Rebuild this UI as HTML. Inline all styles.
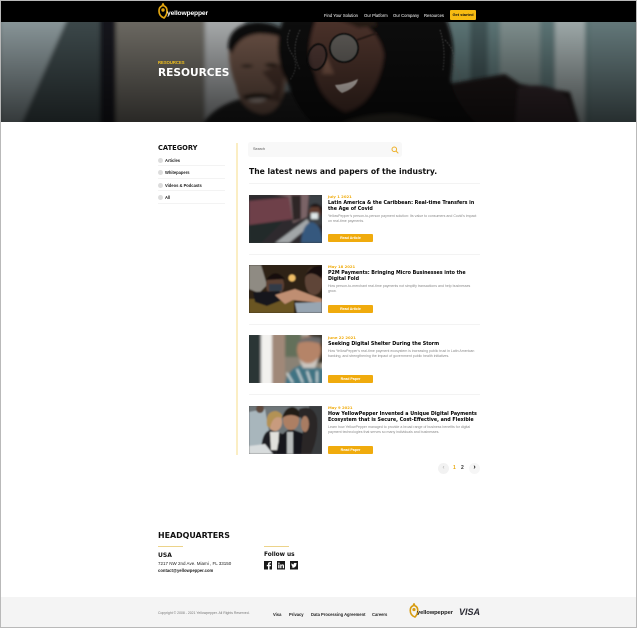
<!DOCTYPE html>
<html><head><meta charset="utf-8"><style>
*{margin:0;padding:0;box-sizing:border-box}
html,body{width:637px;height:628px;overflow:hidden;background:#fff}
body{position:relative;font-family:"Liberation Sans",sans-serif;color:#111}
.a{position:absolute;white-space:nowrap}
.h{font-family:"DejaVu Sans",sans-serif;font-weight:bold}
.nav{font-size:4.2px;color:#fff;top:13px}
.cat{font-size:4.1px;font-weight:bold;left:165px;color:#222}
.dot{position:absolute;left:158px;width:5px;height:5px;border-radius:50%;background:#dcdcdc}
.ln{position:absolute;height:1px;background:#f3f3f3}
.date{font-family:"DejaVu Sans",sans-serif;font-size:3.8px;font-weight:bold;color:#f0ac0e;left:328px}
.t{font-family:"DejaVu Sans",sans-serif;font-size:4.8px;font-weight:bold;color:#000;left:328px;line-height:6px}
.d{font-size:3.55px;color:#8a8a8a;left:328px;line-height:5.2px}
.btn{position:absolute;left:328px;width:45px;height:8px;background:#f0ab0d;color:#fff;font-size:3.6px;font-weight:bold;text-align:center;line-height:8px;border-radius:1px}
.img{position:absolute;left:249px;width:73px;height:48px;overflow:hidden}
.f{font-size:4.1px;font-weight:bold;top:612px;color:#222}
</style></head><body>
<div class="a" style="left:0;top:0;width:637px;height:628px;border:1px solid #b9b9b9;z-index:9;white-space:normal"></div>

<svg class="a" style="left:0;top:22px" width="637" height="100" viewBox="0 0 637 100">
<defs><filter id="b" x="-10%" y="-10%" width="120%" height="120%"><feGaussianBlur stdDeviation="2.2"/></filter><filter id="b1" x="-10%" y="-10%" width="120%" height="120%"><feGaussianBlur stdDeviation="1.800"/></filter><filter id="b2"><feGaussianBlur stdDeviation=".5"/></filter>
<linearGradient id="g" x1="0" x2="0" y1="0" y2="1"><stop offset="0" stop-color="#000" stop-opacity=".02"/><stop offset="1" stop-color="#000" stop-opacity=".62"/></linearGradient></defs>
<rect width="637" height="100" fill="#5f6b6e"/>
<g filter="url(#b)">
<polygon points="0,-5 68,-5 20,105 0,105" fill="#8a979a"/>
<polygon points="68,-5 100,-5 100,105 20,105" fill="#3d494b"/>
<rect x="100" y="-5" width="16" height="110" fill="#15191b"/>
<rect x="116" y="-5" width="90" height="110" fill="#6d6a64"/>
<rect x="205" y="-5" width="40" height="110" fill="#a9acad"/>
<rect x="450" y="-5" width="187" height="110" fill="#5d7677"/>
<rect x="500" y="-5" width="40" height="110" fill="#80908f"/>
<rect x="555" y="-5" width="30" height="110" fill="#a0abab"/>
<rect x="590" y="-5" width="47" height="110" fill="#657a7c"/>
<rect x="470" y="-5" width="18" height="110" fill="#425759"/>
</g>
<g filter="url(#b1)">
<path d="M200 105Q215 82 245 76L300 68 480 105Z" fill="#1c1c1c"/>
<path d="M445 100 448 62 505 52 520 62 570 70 580 105H440Z" fill="#1a1919"/>
<path d="M518 66Q548 58 568 76L578 105H515Z" fill="#33282a"/>
<path d="M229 26Q232 8 258 6 285 8 290 35L284 70Q278 92 262 92 240 88 236 64Q228 45 229 26Z" fill="#6a5145"/>
<path d="M228 26Q228 2 258 0 288 2 296 26 283 11 258 12 238 14 232 32Z" fill="#110e0d"/>
<path d="M240 44Q247 41 254 44 247 47 240 44ZM264 43Q271 39 279 43 271 47 264 43Z" fill="#1a1310"/>
<path d="M262 50 276 66 268 78 280 80 286 40Z" fill="#463329"/>
<path d="M242 74Q256 69 272 73L268 77Q256 75 246 78Z" fill="#1b1311"/>
<path d="M247 78Q258 76 267 77 258 83 247 78Z" fill="#a89a92"/>
<path d="M284 -5Q270 30 288 62 298 90 316 105H480Q448 75 450 45 458 25 445 -5Z" fill="#0c0a0a"/>
<path d="M317 -5Q303 30 315 52 320 78 345 90 372 84 382 45 388 15 380 -5Z" fill="#4c3329"/>
<path d="M352 -5Q388 12 384 48 380 75 358 94 420 100 448 70 460 20 440 -5Z" fill="#0e0c0b"/>
<path d="M320 -5Q345 -2 358 6L378 4 372 -5Z" fill="#251a16"/>
<path d="M335 105Q358 92 395 92 430 96 450 105Z" fill="#36332c"/>
<path d="M326 34 322 52 334 52Z" fill="#7a5646"/>
</g>
<g filter="url(#b2)" fill="none">
<path d="M335 63Q348 62 358 57 356 66 342 71 337 68 335 63Z" fill="#dcd2cb"/>
<ellipse cx="317" cy="35" rx="9" ry="13" stroke="#0c0c0c" stroke-width="1.800" fill="#4a3a35" fill-opacity=".5" transform="rotate(15 317 35)"/>
<ellipse cx="344" cy="26" rx="14" ry="14" stroke="#0c0c0c" stroke-width="1.800" fill="#6f7d7c" fill-opacity=".55"/>
<path d="M357 18 377 11" stroke="#2b1c18" stroke-width="1.800"/>
<path d="M290 8q-6 12 2 24t-2 26M445 18q14 14 8 34M453 42q8 8 7 18M300 8q-10 20 0 40M440 8q6 18 3 40" stroke="#6b6b6b" stroke-width=".7" stroke-dasharray="1.500 1.500"/>
</g>
<rect width="637" height="100" fill="url(#g)"/>
</svg>

<div class="a" style="left:0;top:1px;width:637px;height:21px;background:#000"></div>
<svg class="a" style="left:158px;top:3px" width="10" height="16" viewBox="0 0 10 16"><path d="M5 1 4 3Q1 4 1 8 1 13 6 15 9 12 9 8 9 4 6 3Z" fill="none" stroke="#e0a40f" stroke-width="1.700"/><circle cx="5" cy="7" r="1.700" fill="#e0a40f"/></svg>
<div class="a" style="left:167px;top:10px;font-size:6.700px;font-weight:bold;color:#fff;letter-spacing:-.15px">yellowpepper</div>
<div class="a nav" style="left:324px">Find Your Solution</div>
<div class="a nav" style="left:364px">Our Platform</div>
<div class="a nav" style="left:393px">Our Company</div>
<div class="a nav" style="left:424px">Resources</div>
<div class="a" style="left:450px;top:10px;width:26px;height:10px;background:#f7bb12;border-radius:1px;font-size:4px;line-height:10px;text-align:center;color:#111;font-weight:bold">Get started</div>
<div class="a" style="left:158px;top:60px;font-size:4.200px;font-weight:bold;color:#f4c21c">RESOURCES</div>
<div class="a h" style="left:158px;top:67px;font-size:10.600px;color:#fff">RESOURCES</div>

<div class="a h" style="left:158px;top:144px;font-size:6.700px;color:#111">CATEGORY</div>
<i class="dot" style="top:158px"></i><div class="a cat" style="top:158px">Articles</div><div class="ln" style="left:158px;top:165px;width:67px"></div>
<i class="dot" style="top:170px"></i><div class="a cat" style="top:170px">Whitepapers</div><div class="ln" style="left:158px;top:178px;width:67px"></div>
<i class="dot" style="top:183px"></i><div class="a cat" style="top:183px">Videos &amp; Podcasts</div><div class="ln" style="left:158px;top:190px;width:67px"></div>
<i class="dot" style="top:195px"></i><div class="a cat" style="top:195px">All</div><div class="ln" style="left:158px;top:203px;width:67px"></div>
<div class="a" style="left:236px;top:143px;width:2px;height:312px;background:#fbeec4"></div>

<div class="a" style="left:249px;top:143px;width:152px;height:13px;background:#f8f8f8;box-shadow:0 0 1px #ddd"></div>
<div class="a" style="left:253px;top:147px;font-size:3.800px;color:#555">Search</div>
<svg class="a" style="left:391px;top:146px" width="8" height="8" viewBox="0 0 8 8"><circle cx="3.300" cy="3.300" r="2.300" fill="none" stroke="#eeb12a" stroke-width="1"/><path d="M5 5 7.300 7.300" stroke="#eeb12a" stroke-width="1"/></svg>
<div class="a h" style="left:249px;top:167px;font-size:7.650px;color:#111">The latest news and papers of the industry.</div>
<div class="ln" style="left:249px;top:183px;width:231px"></div>

<div class="img" style="top:195px;background:#333"><svg width="73" height="48" viewBox="0 0 73 48"><defs><filter id="c"><feGaussianBlur stdDeviation="1"/></filter></defs><g filter="url(#c)"><rect width="73" height="48" fill="#2e2c2e"/><polygon points="0,6 42,2 44,24 0,30" fill="#6e3f48"/><polygon points="20,-2 60,-2 58,22 44,28 40,2" fill="#7a6466"/><polygon points="42,0 52,0 52,24 44,26" fill="#2d2628"/><polygon points="26,48 58,24 62,30 40,48" fill="#a2a6a8"/><polygon points="0,30 34,26 12,48 0,48" fill="#23292a"/><rect x="60" y="0" width="13" height="30" fill="#3a3f44"/><path d="M52 48Q53 30 62 27 72 28 74 48Z" fill="#35587e"/><circle cx="66" cy="17" r="6" fill="#5e3a2e"/><path d="M60 12Q66 5 73 12V22L70 12Z" fill="#1d1512"/><rect x="62" y="18" width="7" height="6" fill="#dfe7e8"/></g></svg></div>
<div class="a date" style="top:194px">July 1 2021</div>
<div class="a t" style="top:201px">Latin America &amp; the Caribbean: Real-time Transfers in<br>the Age of Covid</div>
<div class="a d" style="top:214px">YellowPepper’s person-to-person payment solution: Its value to consumers and Covid’s impact<br>on real-time payments.</div>
<div class="btn" style="top:234px">Read Article</div>
<div class="ln" style="left:249px;top:254px;width:231px"></div>

<div class="img" style="top:265px;background:#2a2218"><svg width="73" height="48" viewBox="0 0 73 48"><defs><filter id="c2"><feGaussianBlur stdDeviation=".8"/></filter></defs><g filter="url(#c2)"><rect width="73" height="48" fill="#2f2315"/><rect x="0" y="34" width="45" height="14" fill="#6a5522"/><circle cx="43" cy="13" r="3.500" fill="#eebd66"/><path d="M0 0H12L18 20 10 28 0 24Z" fill="#8f8b83"/><ellipse cx="26" cy="20" rx="9" ry="11" fill="#5c3f32"/><path d="M17 15Q26 2 36 14Z" fill="#150f0c"/><rect x="20" y="19" width="13" height="7" fill="#333a47"/><path d="M4 27 30 26 38 33 18 41 6 37Z" fill="#12151a"/><path d="M26 30 46 24 73 34V38L44 35 36 39Z" fill="#bf8e72"/><path d="M48 48 46 38 73 37V48Z" fill="#97a5b2"/><ellipse cx="65" cy="16" rx="9" ry="14" fill="#5e4539"/><path d="M56 12Q60 0 73 1V14Q62 4 56 12Z" fill="#15100d"/></g></svg></div>
<div class="a date" style="top:264px">May 18 2021</div>
<div class="a t" style="top:271px">P2M Payments: Bringing Micro Businesses into the<br>Digital Fold</div>
<div class="a d" style="top:284px">How person-to-merchant real-time payments not simplify transactions and help businesses<br>grow.</div>
<div class="btn" style="top:305px">Read Article</div>
<div class="ln" style="left:249px;top:324px;width:231px"></div>

<div class="img" style="top:335px;background:#ddd"><svg width="73" height="48" viewBox="0 0 73 48"><defs><filter id="c3"><feGaussianBlur stdDeviation="1.200"/></filter></defs><g filter="url(#c3)"><rect width="73" height="48" fill="#8a8274"/><rect x="-3" y="-2" width="15" height="52" fill="#2c3436"/><rect x="12" y="-2" width="11" height="52" fill="#f2f1ee"/><rect x="23" y="-2" width="13" height="52" fill="#a08878"/><rect x="36" y="-2" width="16" height="24" fill="#63705a"/><rect x="60" y="-2" width="15" height="30" fill="#3a362c"/><path d="M36 50Q38 34 52 30L75 34V50Z" fill="#3f7383"/><ellipse cx="60" cy="15" rx="12" ry="14" fill="#b58468"/><path d="M47 9Q55 -1 72 3V9Q58 4 47 9Z" fill="#6a6a6a"/><path d="M50 24Q60 34 70 22L66 33H54Z" fill="#ccc6bf"/><path d="M38 38 44 48M48 34 54 48M58 36 62 48M68 36 68 48" stroke="#e4ecec" stroke-width="1.500"/></g></svg></div>
<div class="a date" style="top:335px">June 22 2021</div>
<div class="a t" style="top:342px">Seeking Digital Shelter During the Storm</div>
<div class="a d" style="top:349px">How YellowPepper's real-time payment ecosystem is increasing public trust in Latin American<br>banking, and strengthening the impact of government public health initiatives.</div>
<div class="btn" style="top:375px">Read Paper</div>
<div class="ln" style="left:249px;top:394px;width:231px"></div>

<div class="img" style="top:406px;background:#555"><svg width="73" height="48" viewBox="0 0 73 48"><defs><filter id="c4"><feGaussianBlur stdDeviation=".8"/></filter></defs><g filter="url(#c4)"><rect width="73" height="48" fill="#6e7679"/><path d="M0 6 16 3 20 26 14 40H0Z" fill="#a8b6bc"/><circle cx="11" cy="3" r="4" fill="#5e4a3c"/><rect x="60" width="13" height="48" fill="#373a3c"/><path d="M12 48Q12 25 22 24L34 28 36 48Z" fill="#1a1d20"/><path d="M21 26H30L29 44H22Z" fill="#e1e0dc"/><ellipse cx="26" cy="16" rx="7" ry="9" fill="#c89b7e"/><path d="M18 20Q16 5 27 5 34 7 33 12 24 8 21 22Z" fill="#b39254"/><path d="M28 48Q28 27 42 23L56 28 58 48Z" fill="#14171a"/><rect x="38" y="26" width="6" height="22" fill="#b8bcbc"/><ellipse cx="42" cy="14" rx="8" ry="10" fill="#ad7f63"/><path d="M33 12Q36 1 44 1 52 3 51 12 42 6 33 12Z" fill="#221a15"/><path d="M50 3Q64 -2 68 12 70 30 62 48H52L54 24Q54 12 50 10Z" fill="#292725"/><ellipse cx="56" cy="18" rx="4" ry="8" fill="#a87b62"/><path d="M0 40 16 38 24 48H0Z" fill="#d8dcdd"/></g></svg></div>
<div class="a date" style="top:405px">May 9 2021</div>
<div class="a t" style="top:412px">How YellowPepper Invented a Unique Digital Payments<br>Ecosystem that is Secure, Cost-Effective, and Flexible</div>
<div class="a d" style="top:425px">Learn how YellowPepper managed to provide a broad range of business benefits for digital<br>payment technologies that serves so many individuals and businesses.</div>
<div class="btn" style="top:446px">Read Paper</div>

<div class="a" style="left:438px;top:463px;width:11px;height:11px;border-radius:50%;background:#f2f2f2;color:#aaa;font-size:6px;text-align:center;line-height:10px">‹</div>
<div class="a" style="left:453px;top:465px;font-size:5px;color:#e9a90d;font-weight:bold">1</div>
<div class="a" style="left:461px;top:465px;font-size:5px;color:#333;font-weight:bold">2</div>
<div class="a" style="left:469px;top:463px;width:11px;height:11px;border-radius:50%;background:#f6f6f6;color:#111;font-size:7px;font-weight:bold;text-align:center;line-height:10px">›</div>

<div class="a h" style="left:158px;top:531px;font-size:7.900px;color:#111">HEADQUARTERS</div>
<div class="a" style="left:158px;top:546px;width:25px;height:1px;background:#ecd38a"></div>
<div class="a" style="left:264px;top:546px;width:25px;height:1px;background:#ecd38a"></div>
<div class="a h" style="left:158px;top:552px;font-size:6px;color:#111">USA</div>
<div class="a" style="left:158px;top:561px;font-size:4.500px;color:#222">7217 NW 2nd Ave. Miami , FL 33150</div>
<div class="a" style="left:158px;top:568px;font-size:4.200px;font-weight:bold;color:#222">contact@yellowpepper.com</div>
<div class="a h" style="left:264px;top:552px;font-size:5.800px;color:#111">Follow us</div>
<svg class="a" style="left:264px;top:561px" width="36" height="9" viewBox="0 0 36 9"><rect width="8" height="8.500" fill="#1a1a1a"/><path d="M5.500 8.500V5.300H6.800L7 3.900H5.500V3Q5.500 2.300 6.300 2.300H7V1.100H5.800Q4 1.100 4 2.900V3.900H2.800V5.300H4V8.500Z" fill="#fff"/><rect x="13" width="8" height="8.500" fill="#1a1a1a"/><path d="M14.200 3.500H15.500V7.300H14.200ZM16.200 3.500H17.400V4Q18 3.300 18.900 3.400 20 3.500 20 5V7.300H18.800V5.200Q18.800 4.400 18.200 4.400 17.400 4.500 17.400 5.300V7.300H16.200Z" fill="#fff"/><circle cx="14.900" cy="2.200" r=".7" fill="#fff"/><rect x="26" width="8" height="8.500" fill="#1a1a1a"/><path d="M27.200 6.400Q29 7.400 30.700 6.300 32.500 5 32.300 3.200L33 2.500 32.200 2.700 32.700 2 32 2.300Q31 1.500 30 2.300 29.500 2.900 29.700 3.500 28.300 3.400 27.500 2.300 27 3.400 28 4.300L27.500 4.200Q27.600 5 28.500 5.400H28Q28.300 6 29.100 6.100 28.300 6.600 27.200 6.400Z" fill="#fff"/></svg>

<div class="a" style="left:1px;top:597px;width:635px;height:30px;background:#f4f4f4"></div>
<div class="a" style="left:158px;top:611px;font-size:3.450px;color:#777">Copyright © 2008 - 2021 Yellowpepper. All Rights Reserved.</div>
<div class="a f" style="left:273px">Visa</div>
<div class="a f" style="left:289px">Privacy</div>
<div class="a f" style="left:311px">Data Processing Agreement</div>
<div class="a f" style="left:372px">Careers</div>
<svg class="a" style="left:409px;top:603px" width="10" height="15" viewBox="0 0 10 16"><path d="M5 1 4 3Q1 4 1 8 1 13 6 15 9 12 9 8 9 4 6 3Z" fill="none" stroke="#d79c10" stroke-width="1.700"/><circle cx="5" cy="7" r="1.700" fill="#d79c10"/></svg>
<div class="a" style="left:417px;top:610px;font-size:5.800px;font-weight:bold;color:#222;letter-spacing:-.1px">yellowpepper</div>
<div class="a" style="left:459px;top:607px;font-size:9px;font-weight:bold;font-style:italic;color:#2a2a33">VISA</div>
</body></html>
